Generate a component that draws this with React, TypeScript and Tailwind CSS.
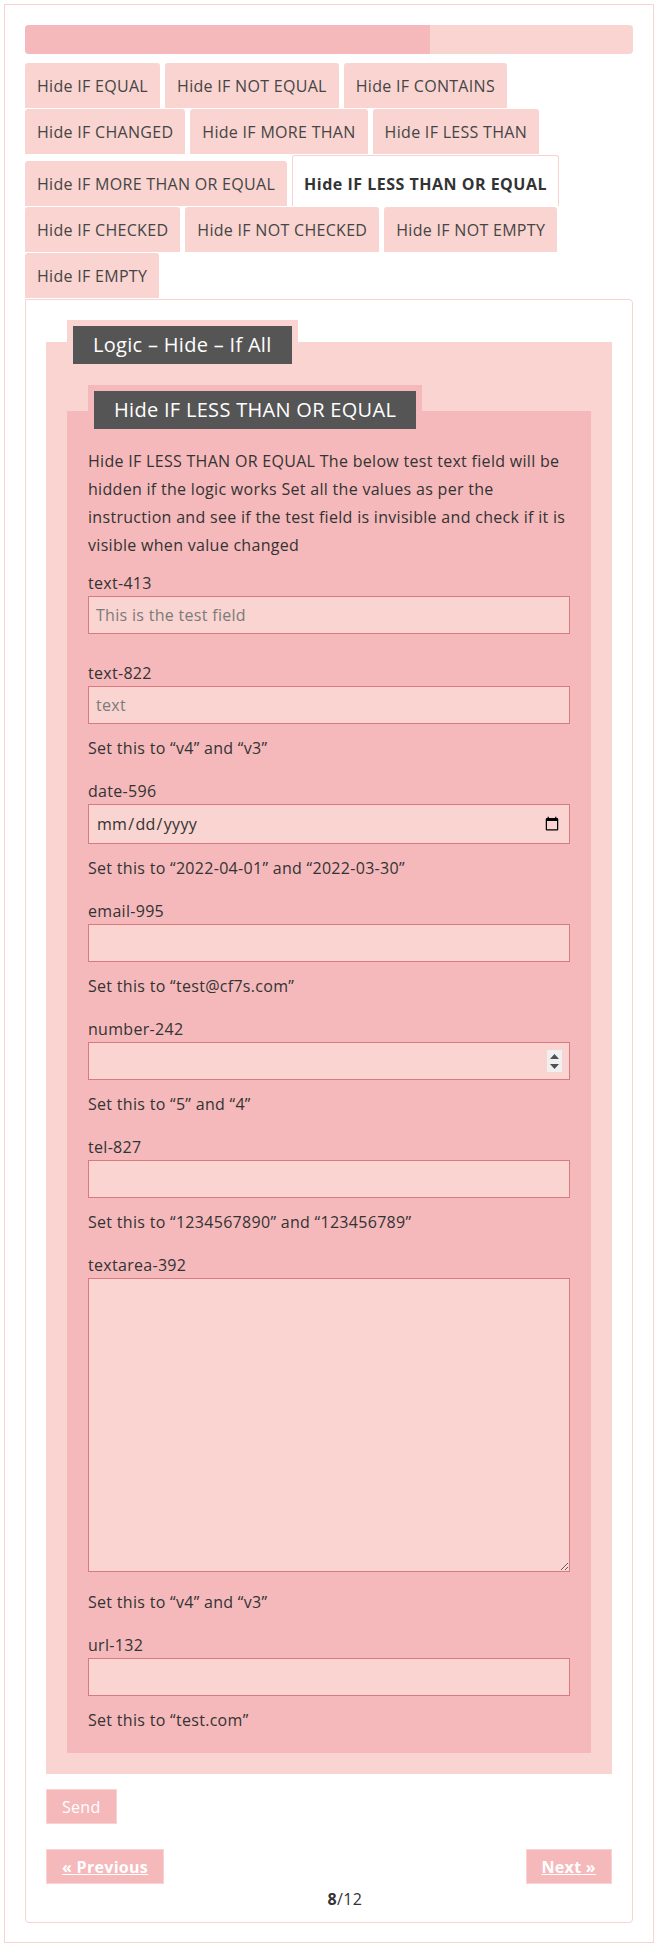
import type { ReactNode } from 'react';

const TABS = [
  'Hide IF EQUAL',
  'Hide IF NOT EQUAL',
  'Hide IF CONTAINS',
  'Hide IF CHANGED',
  'Hide IF MORE THAN',
  'Hide IF LESS THAN',
  'Hide IF MORE THAN OR EQUAL',
  'Hide IF LESS THAN OR EQUAL',
  'Hide IF CHECKED',
  'Hide IF NOT CHECKED',
  'Hide IF NOT EMPTY',
  'Hide IF EMPTY',
];

const ACTIVE = 'Hide IF LESS THAN OR EQUAL';

const inputCls =
  'block w-full h-[38px] border border-[#da7a80] bg-[#f9d4d0] px-[7px] text-[16px] text-[#333] placeholder:text-[#7b7b7b] outline-none';

function Label({ children, className = '' }: { children: ReactNode; className?: string }) {
  return <label className={`block leading-[26px] text-[#333] ${className}`}>{children}</label>;
}

function Help({ children, className = 'mt-[11px]' }: { children: ReactNode; className?: string }) {
  return <p className={`leading-[26px] text-[#333] ${className}`}>{children}</p>;
}

function NumberSpinner() {
  return (
    <div className="absolute right-[8px] top-[8px] flex h-[22px] w-[15px] flex-col items-center justify-center gap-[5px] bg-[#f0f0f0]">
      <svg width="9" height="5" viewBox="0 0 9 5">
        <path d="M4.5 0L9 5H0z" fill="#505050" />
      </svg>
      <svg width="9" height="5" viewBox="0 0 9 5">
        <path d="M0 0h9L4.5 5z" fill="#505050" />
      </svg>
    </div>
  );
}

export default function App() {
  return (
    <div className="min-h-[1951px] bg-white pt-[4px] font-['Open_Sans',sans-serif] text-[16px] tracking-[0.3px] text-[#333]">
      <div className="ml-[4px] w-[650px] border border-[#f9d3cf] px-[20px] pt-[20px] pb-[19px]">
        {/* progress */}
        <div className="h-[29px] overflow-hidden rounded-[4px] bg-[#f9d4d0]">
          <div className="h-full w-[66.67%] bg-[#f5b9bb]" />
        </div>

        {/* tabs */}
        <div className="mt-[9px] flex flex-wrap items-end gap-x-[5px] gap-y-[1px]">
          {TABS.map((t) =>
            t === ACTIVE ? (
              <div
                key={t}
                className="flex h-[51px] items-center rounded-t-[3px] border border-b-0 border-[#f9d3cf] bg-white px-[11px] pt-[5px] font-bold tracking-[0.5px] text-[#333]"
              >
                {t}
              </div>
            ) : (
              <div
                key={t}
                className="flex h-[45px] items-center rounded-t-[3px] bg-[#f9d4d0] px-[12px] text-[#454545]"
              >
                {t}
              </div>
            )
          )}
        </div>

        {/* panel */}
        <div className="mt-[1px] rounded-[4px] rounded-tl-none border border-[#f9d3cf] px-[20px] pt-[20px] pb-[11px]">
          {/* outer fieldset */}
          <div className="pt-[22px]">
            <div className="flow-root bg-[#f9d4d0] px-[21px] pb-[21px]">
              <div className="-mt-[22px] w-fit border-[6px] border-[#f9d4d0] bg-[#555]">
                <div className="flex h-[38px] items-center px-[20px] text-[20px] text-white">
                  Logic – Hide – If All
                </div>
              </div>

              {/* inner fieldset */}
              <div className="mt-[15px] pt-[26px]">
                <div className="flow-root bg-[#f5b9bb] px-[21px] pb-[20px]">
                  <div className="-mt-[26px] w-fit border-[6px] border-[#f5b9bb] bg-[#555]">
                    <div className="flex h-[38px] items-center px-[20px] text-[20px] text-white">
                      Hide IF LESS THAN OR EQUAL
                    </div>
                  </div>

                  <p className="mt-[12px] leading-[28px] text-[#333]">
                    Hide IF LESS THAN OR EQUAL The below test text field will be hidden if the logic works Set
                    all the values as per the instruction and see if the test field is invisible and check if it
                    is visible when value changed
                  </p>

                  <Label className="mt-[11px]">text-413</Label>
                  <input type="text" className={inputCls} placeholder="This is the test field" />

                  <Label className="mt-[26px]">text-822</Label>
                  <input type="text" className={inputCls} placeholder="text" />
                  <Help>Set this to “v4” and “v3”</Help>

                  <Label className="mt-[17px]">date-596</Label>
                  <input type="date" className={`${inputCls} h-[40px]`} />
                  <Help>Set this to “2022-04-01” and “2022-03-30”</Help>

                  <Label className="mt-[17px]">email-995</Label>
                  <input type="email" className={inputCls} />
                  <Help>Set this to “test@cf7s.com”</Help>

                  <Label className="mt-[17px]">number-242</Label>
                  <div className="relative">
                    <input
                      type="number"
                      className={`${inputCls} [appearance:textfield] [&::-webkit-inner-spin-button]:appearance-none`}
                    />
                    <NumberSpinner />
                  </div>
                  <Help>Set this to “5” and “4”</Help>

                  <Label className="mt-[17px]">tel-827</Label>
                  <input type="tel" className={inputCls} />
                  <Help>Set this to “1234567890” and “123456789”</Help>

                  <Label className="mt-[17px]">textarea-392</Label>
                  <textarea className="block h-[294px] w-full border border-[#da7a80] bg-[#f9d4d0] px-[7px] outline-none" />
                  <Help className="mt-[17px]">Set this to “v4” and “v3”</Help>

                  <Label className="mt-[17px]">url-132</Label>
                  <input type="url" className={inputCls} />
                  <Help>Set this to “test.com”</Help>
                </div>
              </div>
            </div>
          </div>

          <button className="mt-[15px] block h-[35px] border border-[#f9d3cf] bg-[#f5b9bb] px-[15px] text-[16px] text-white">
            Send
          </button>

          <div className="mt-[25px] flex items-start">
            <button className="h-[35px] border border-[#f9d3cf] bg-[#f5b9bb] px-[15px] font-bold text-white underline">
              « Previous
            </button>
            <div className="flex-1 pt-[38px] text-center leading-[24px] text-[#333]">
              <b>8</b>/12
            </div>
            <button className="h-[35px] border border-[#f9d3cf] bg-[#f5b9bb] px-[15px] font-bold text-white underline">
              Next »
            </button>
          </div>
        </div>
      </div>
    </div>
  );
}
